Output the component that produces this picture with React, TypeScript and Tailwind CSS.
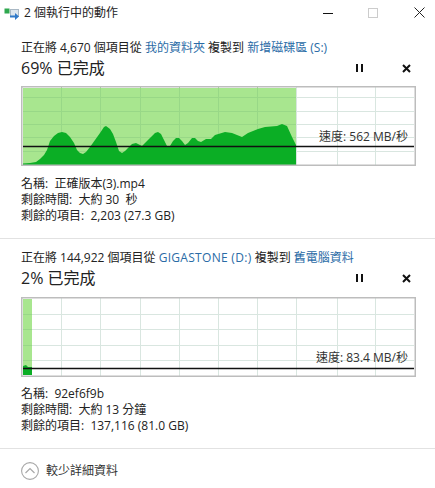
const vx = [61, 100, 140, 179, 218, 257, 296, 337, 375];

const area1 =
  "23,165 23,163.5 30,163 36,162 40,159 44,155 47,150 50,141 54,136 58,133 62,132 66,133 70,137 74,143 77,150 80,153 83,154 86,152 90,147 95,140 100,133 104,127 106,126 110,129 113,134 116,142 119,151 122,153 125,151 128,148 132,144 136,143 140,145 142,146 146,142 150,138 155,133 158,132 161,134 164,140 167,146 170,146 173,141 176,138 179,138 182,141 185,145 188,143 192,138 195,138 198,141 201,142 206,139 211,139 215,135 225,132 232,133 242,137 248,133 258,129 265,127 277,126 282,124 287,126 292,137 296,145 296,165";

function Graph({ top, hy, lineY, greenEnd, area, speed, labelBottom }: { top: number; hy: number[]; lineY: number; greenEnd: number; area: string; speed: string; labelBottom: string }) {
  const bottom = top + 80;
  return (
    <div className="relative w-[395px] h-[80px]">
      <svg width="395" height="80" viewBox={`21 ${top} 395 80`} className="block">
        <rect x="21" y={top} width="395" height="80" fill="#ffffff" />
        <rect x="23" y={top + 2} width={greenEnd - 23} height="76" fill="#a8e68f" />
        {vx.map((x) => (
          <line key={x} x1={x + 0.5} x2={x + 0.5} y1={top} y2={bottom} stroke={x < greenEnd ? "#98d887" : "#d9e6e0"} />
        ))}
        {hy.map((y) => (
          <g key={y}>
            <line x1="23" x2={greenEnd} y1={y + 0.5} y2={y + 0.5} stroke="#98d887" />
            <line x1={greenEnd} x2="414" y1={y + 0.5} y2={y + 0.5} stroke="#d9e6e0" />
          </g>
        ))}
        <polygon points={area} fill="#0bae25" />
        <line x1="23" x2="414" y1={lineY} y2={lineY} stroke="#111111" strokeWidth="1.4" />
        <rect x="21.75" y={top + 0.75} width="393.5" height="78.5" fill="none" stroke="#bdbdbd" strokeWidth="1.5" />
      </svg>
      <span className={`absolute right-[8px] ${labelBottom} text-[12px] leading-[16px] text-[#333] whitespace-nowrap`}>{speed}</span>
    </div>
  );
}

function Head({ children, title }: { children: React.ReactNode; title: string }) {
  return (
    <>
      <div className="h-[16px] text-[12px] leading-[16px] text-[#222] whitespace-nowrap">{children}</div>
      <div className="flex items-center justify-between h-[24px] w-[395px]">
        <span className="text-[16px] leading-[24px] text-[#222]">{title}</span>
        <div className="flex items-center gap-[38px] pr-[5px]">
          <svg width="8" height="10" viewBox="0 0 8 10"><path d="M1 1v8M6 1v8" stroke="#111" strokeWidth="2" /></svg>
          <svg width="9" height="9" viewBox="0 0 9 9"><path d="M1 1l7 7M8 1l-7 7" stroke="#111" strokeWidth="2" /></svg>
        </div>
      </div>
    </>
  );
}

function Info({ lines }: { lines: string[] }) {
  return (
    <div className="text-[12px] leading-[16px] text-[#222]">
      {lines.map((l) => (
        <div key={l} className="h-[16px] whitespace-pre">{l}</div>
      ))}
    </div>
  );
}

const L = ({ children }: { children: React.ReactNode }) => <span className="text-[#2a6ba6]">{children}</span>;

export default function App() {
  return (
    <div
      className="w-[435px] h-[488px] bg-white overflow-hidden"
      style={{ fontFamily: '"Open Sans","Noto Sans CJK TC",sans-serif' }}
    >
      <div className="flex items-center h-[25px] pl-[4px] pr-[10px]">
        <svg width="16" height="14" viewBox="0 0 16 14" className="mr-[4px]">
          <rect x="0.5" y="2.5" width="5" height="5" fill="#2fa84f" />
          <rect x="6.5" y="3.5" width="8" height="7" fill="#dce6ee" stroke="#a9b8c4" />
          <path d="M6 9.5h5V7l4 3.5-4 3.5v-2.5H6z" fill="#2f79c8" />
        </svg>
        <span className="text-[12px] leading-[16px] text-[#222]">2 個執行中的動作</span>
        <div className="ml-auto flex items-center gap-[36px]">
          <svg width="11" height="10" viewBox="0 0 11 10" className="mr-[-2px]"><path d="M0 5.5h10" stroke="#111" /></svg>
          <svg width="10" height="10" viewBox="0 0 10 10"><rect x="0.5" y="0.5" width="9" height="9" fill="none" stroke="#ccc" /></svg>
          <svg width="11" height="11" viewBox="0 0 11 11"><path d="M0.5 0.5l10 10M10.5 0.5l-10 10" stroke="#222" /></svg>
        </div>
      </div>

      <section className="pl-[21px] pt-[15px]">
        <Head title="69% 已完成">
          正在將 4,670 個項目從 <L>我的資料夾</L> 複製到 <L>新增磁碟區 (S:)</L>
        </Head>
        <div className="mt-[6px]">
          <Graph top={86} hy={[97, 111, 124, 137, 151]} lineY={146.5} greenEnd={296} area={area1} speed="速度: 562 MB/秒" labelBottom="bottom-[21px]" />
        </div>
        <div className="mt-[10px]">
          <Info lines={["名稱:  正確版本(3).mp4", "剩餘時間:  大約 30  秒", "剩餘的項目:  2,203 (27.3 GB)"]} />
        </div>
      </section>

      <div className="mt-[14px] h-px bg-[#e2e2e2]" />

      <section className="pl-[21px] pt-[11px]">
        <Head title="2% 已完成">
          正在將 144,922 個項目從 <span className="text-[#2a6ba6] tracking-[0.3px]">GIGASTONE (D:)</span> 複製到 <L>舊電腦資料</L>
        </Head>
        <div className="mt-[7px]">
          <Graph top={297} hy={[314, 329, 345, 360]} lineY={368.5} greenEnd={32} area="23,375 23,366 26,365 28,367 32,367 32,375" speed="速度: 83.4 MB/秒" labelBottom="bottom-[11px]" />
        </div>
        <div className="mt-[9px]">
          <Info lines={["名稱:  92ef6f9b", "剩餘時間:  大約 13 分鐘", "剩餘的項目:  137,116 (81.0 GB)"]} />
        </div>
      </section>

      <div className="mt-[14px] h-px bg-[#e2e2e2]" />

      <div className="flex items-center gap-[7px] pl-[21px] pt-[13px]">
        <svg width="18" height="18" viewBox="0 0 18 18">
          <circle cx="9" cy="9" r="8.4" fill="none" stroke="#a8a8a8" strokeWidth="1.1" />
          <path d="M4.5 11l4.5-4.5 4.5 4.5" fill="none" stroke="#a8a8a8" strokeWidth="1.2" />
        </svg>
        <span className="text-[12px] leading-[16px] text-[#333]">較少詳細資料</span>
      </div>
    </div>
  );
}
